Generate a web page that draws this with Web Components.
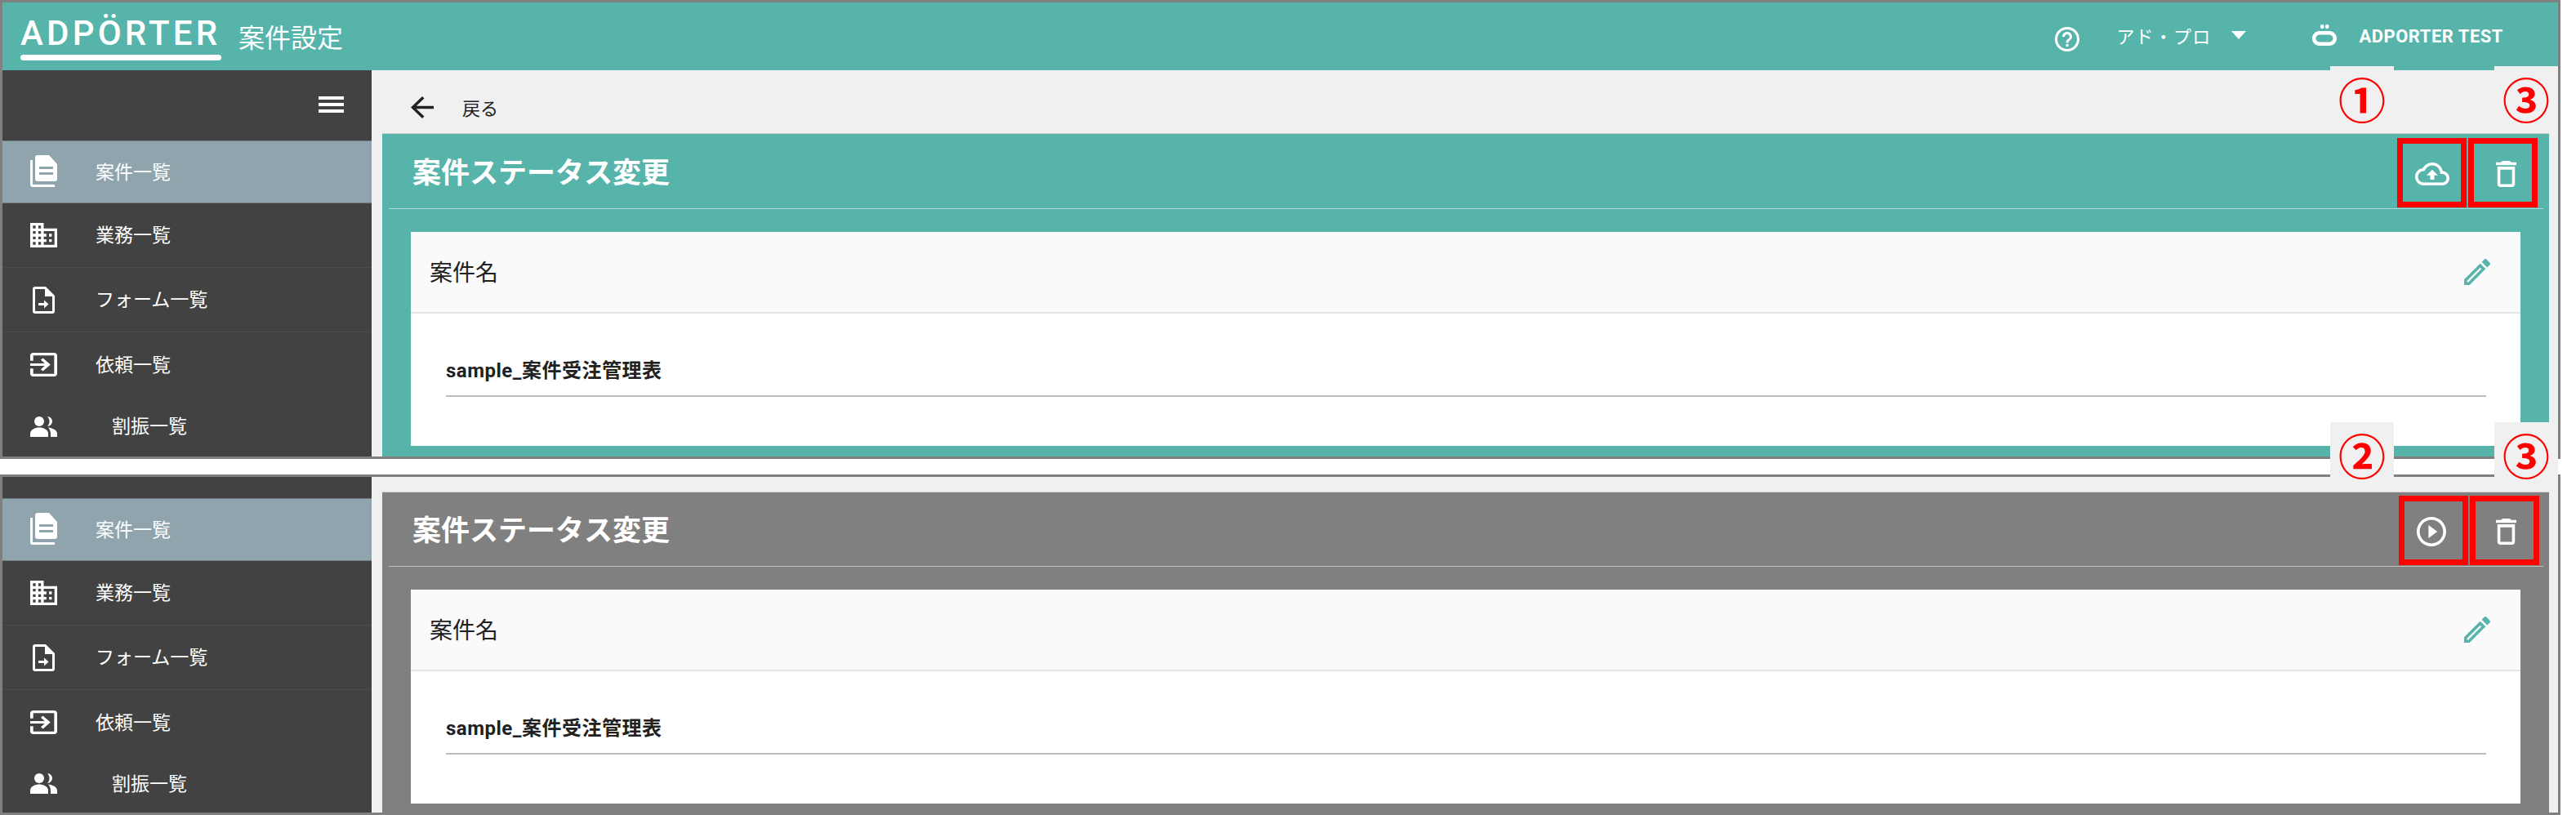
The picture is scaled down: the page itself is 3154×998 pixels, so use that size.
<!DOCTYPE html>
<html lang="ja">
<head>
<meta charset="utf-8">
<title>案件設定</title>
<style>
    html, body { margin: 0; background: #fff; overflow: hidden; }
    body { font-family: Roboto, "Noto Sans CJK JP", sans-serif; }
    #sheet { position: relative; width: 3154px; height: 998px; }
    #second { margin-top: 19px; }
</style>
</head>
<body>
<div id="sheet">
    <app-frame id="first" style="--h:562px">
        <top-bar slot="top"></top-bar>
        <side-nav slot="side" style="--lead:86px" burger>
            <side-item icon="doc" selected style="--row:77px">案件一覧</side-item>
            <side-item icon="business" line>業務一覧</side-item>
            <side-item icon="form" line>フォーム一覧</side-item>
            <side-item icon="input">依頼一覧</side-item>
            <side-item icon="people" wide style="--row:72px">割振一覧</side-item>
        </side-nav>
        <back-link slot="main">戻る</back-link>
        <status-panel slot="main" style="--head:92px;--drop:6px;--end:7px">
            <action-button slot="actions" icon="cloud"></action-button>
            <action-button slot="actions" icon="trash" style="--nudge:7px"></action-button>
            <name-card></name-card>
        </status-panel>
    </app-frame>

    <app-frame id="second" style="--h:417px">
        <side-nav slot="side" style="--lead:26px">
            <side-item icon="doc" selected style="--row:77px">案件一覧</side-item>
            <side-item icon="business" line>業務一覧</side-item>
            <side-item icon="form" line>フォーム一覧</side-item>
            <side-item icon="input">依頼一覧</side-item>
            <side-item icon="people" wide style="--row:71px">割振一覧</side-item>
        </side-nav>
        <div slot="main" style="height:18px"></div>
        <status-panel slot="main" tone="grey" style="--head:91px;--drop:5px;--end:5px">
            <action-button slot="actions" icon="play" style="--nudge:0px;--pull:5px"></action-button>
            <action-button slot="actions" icon="trash" style="--nudge:3px"></action-button>
            <name-card></name-card>
        </status-panel>
    </app-frame>

    <note-badge style="left:2853px;top:81px">①</note-badge>
    <note-badge style="left:3054px;top:81px">③</note-badge>
    <note-badge style="left:2853px;top:517px">②</note-badge>
    <note-badge style="left:3054px;top:517px">③</note-badge>
</div>

<script>
// --- Icon shapes (w, h, viewBox, markup) ---
const ICONS = {
    menu: [31, 20, '0 0 31 20', '<path d="M0 0h31v4H0zM0 8h31v4H0zM0 16h31v4H0z"/>'],
    back: [28, 27, '4 4 16 16', '<path d="M20 11H7.83l5.59-5.59L12 4l-8 8 8 8 1.41-1.41L7.83 13H20v-2z"/>'],
    help: [30, 30, '2 2 20 20', '<path d="M11 18h2v-2h-2v2zm1-16C6.48 2 2 6.48 2 12s4.48 10 10 10 10-4.48 10-10S17.52 2 12 2zm0 18c-4.41 0-8-3.59-8-8s3.59-8 8-8 8 3.59 8 8-3.59 8-8 8zm0-14c-2.21 0-4 1.79-4 4h2c0-1.1.9-2 2-2s2 .9 2 2c0 2-3 1.75-3 5h2c0-2.25 3-2.5 3-5 0-2.21-1.79-4-4-4z"/>'],
    mark: [30, 26, '0 0 30 26', '<rect x="10" y="0" width="4.500" height="5" rx="2"/><rect x="16" y="0" width="4.500" height="5" rx="2"/><path fill-rule="evenodd" d="M9 8h12c5 0 9 4 9 9s-4 9-9 9H9c-5 0-9-4-9-9s4-9 9-9zm1 4.500c-3.500 0-5.500 2-5.500 4.500s2 4.500 5.500 4.500h10c3.500 0 5.500-2 5.500-4.500s-2-4.500-5.500-4.500z"/>'],
    doc: [33, 39, '0 0 33 39', '<path fill-rule="evenodd" d="M9 0h14l10 11v18a3 3 0 0 1-3 3H9a3 3 0 0 1-3-3V3a3 3 0 0 1 3-3zm2 14v3h17v-3zm0 7v3h17v-3z"/><path d="M0 6h3v30h27v3H3a3 3 0 0 1-3-3z"/>'],
    business: [33, 30, '2 3 20 18', '<path d="M12 7V3H2v18h20V7H12zM6 19H4v-2h2v2zm0-4H4v-2h2v2zm0-4H4V9h2v2zm0-4H4V5h2v2zm4 12H8v-2h2v2zm0-4H8v-2h2v2zm0-4H8V9h2v2zm0-4H8V5h2v2zm10 12h-8v-2h2v-2h-2v-2h2v-2h-2V9h8v10zm-2-8h-2v2h2v-2zm0 4h-2v2h2v-2z"/>'],
    form: [27, 33, '0 0 27 33', '<path fill-rule="evenodd" d="M3 0h13l11 11v19a3 3 0 0 1-3 3H3a3 3 0 0 1-3-3V3a3 3 0 0 1 3-3zm0 3v27h21V12H15V3z"/><path d="M7 20h7v-3.500l5.500 5-5.500 5V23H7z"/>'],
    input: [33, 29, '3 3 18 18', '<path d="M10.09 15.59L11.5 17l5-5-5-5-1.41 1.41L12.67 11H3v2h9.67l-2.58 2.59zM19 3H5c-1.11 0-2 .9-2 2v4h2V5h14v14H5v-4H3v4c0 1.1.89 2 2 2h14c1.1 0 2-.9 2-2V5c0-1.1-.9-2-2-2z"/>'],
    people: [33, 25, '0 0 33 25', '<circle cx="11" cy="6" r="6"/><path d="M21 0a6 6 0 0 1 0 12c1.500-1.500 2.500-3.500 2.500-6S22.500 1.500 21 0z"/><path d="M0 25v-4c0-5 6-7.500 11-7.500S22 16 22 21v4z"/><path d="M22 13.500c5 .5 11 3 11 7.500v4h-8v-4c0-3-1.200-5.500-3-7.500z"/>'],
    cloud: [42, 28, '0 4 24 16', '<path d="M19.35 10.04C18.67 6.59 15.64 4 12 4 9.11 4 6.6 5.64 5.35 8.04 2.34 8.36 0 10.91 0 14c0 3.31 2.69 6 6 6h13c2.76 0 5-2.24 5-5 0-2.64-2.05-4.78-4.65-4.96zM19 18H6c-2.21 0-4-1.79-4-4 0-2.05 1.53-3.76 3.56-3.97l1.07-.11.5-.95C8.08 7.14 9.94 6 12 6c2.62 0 4.88 1.86 5.39 4.43l.3 1.5 1.53.11c1.56.1 2.78 1.41 2.78 2.96 0 1.65-1.35 3-3 3zM8 13h2.55v3h2.9v-3H16l-4-4z"/>'],
    trash: [25, 32, '5 3 14 18', '<path d="M16 9v10H8V9h8m-1.5-6h-5l-1 1H5v2h14V4h-3.5l-1-1zM18 7H6v12c0 1.1.9 2 2 2h8c1.1 0 2-.9 2-2V7z"/>'],
    play: [36, 36, '2 2 20 20', '<path d="M10 16.5l6-4.500-6-4.500v9zM12 2C6.48 2 2 6.480 2 12s4.480 10 10 10 10-4.480 10-10S17.520 2 12 2zm0 18c-4.410 0-8-3.590-8-8s3.590-8 8-8 8 3.590 8 8-3.590 8-8 8z"/>'],
    edit: [32, 32, '3 3 18 18', '<path d="M3 17.25V21h3.750L17.810 9.940l-3.750-3.750L3 17.250zM5.920 19H5v-.92l9.060-9.060.92.920L5.920 19zM20.710 5.630l-2.340-2.340c-.39-.39-1.020-.39-1.410 0l-1.830 1.830 3.750 3.750 1.830-1.830c.39-.39.39-1.020 0-1.410z"/>']
};

function iconSvg(name) {
    const [w, h, box, body] = ICONS[name];
    return `<svg width="${w}" height="${h}" viewBox="${box}" preserveAspectRatio="none" fill="currentColor" style="display:block;flex:none">${body}</svg>`;
}

// Small helper so every element below only has to give its template
class ShadowPart extends HTMLElement {
    constructor() {
        super();
        this.attachShadow({ mode: 'open' });
    }
    connectedCallback() {
        this.shadowRoot.innerHTML = this.render();
    }
}

// --- Window frame: optional top bar, then sidebar and main column ---
class AppFrame extends ShadowPart {
    render() {
        return `
            <style>
                :host { display: block; box-sizing: border-box; width: 3135px; height: var(--h); border: 3px solid #808080; overflow: hidden; background: #f0f0f0; }
                .wrap { display: flex; flex-direction: column; height: 100%; }
                .row { display: flex; flex: 1; min-height: 0; }
                .main { display: flex; flex-direction: column; flex: 1; min-width: 0; padding: 0 11px 0 13px; }
            </style>
            <div class="wrap">
                <slot name="top"></slot>
                <div class="row">
                    <slot name="side"></slot>
                    <div class="main"><slot name="main"></slot></div>
                </div>
            </div>
        `;
    }
}
customElements.define('app-frame', AppFrame);

class TopBar extends ShadowPart {
    render() {
        return `
            <style>
                :host { display: flex; align-items: center; flex: none; height: 83px; background: #56b4ab; color: #fff; }
                .logo { display: flex; flex-direction: column; margin-left: 22px; width: 246px; margin-top: -2px; }
                .word { font: 500 42px/42px Roboto, sans-serif; letter-spacing: 4.2px; white-space: nowrap; height: 42px; margin-top: 6px; }
                .bar { height: 7px; border-radius: 4px; background: #fff; margin-top: 5px; }
                .page { font: 400 32px "Noto Sans CJK JP", sans-serif; margin-left: 21px; margin-top: -2px; }
                .help { margin-left: auto; margin-top: 7px; }
                .plan { font: 400 22px "Noto Sans CJK JP", sans-serif; margin-left: 45px; margin-top: -4px; letter-spacing: 1.2px; }
                .caret { width: 0; height: 0; border: 9px solid transparent; border-top: 10px solid #fff; border-bottom: 0; margin-left: 25px; margin-top: -4px; }
                .mark { margin-left: 81px; margin-top: -4px; }
                .user { font: 700 22px Roboto, sans-serif; margin-left: 27px; margin-right: 67px; white-space: nowrap; letter-spacing: 0.5px; }
            </style>
            <div class="logo"><div class="word">ADPÖRTER</div><div class="bar"></div></div>
            <div class="page">案件設定</div>
            <div class="help">${iconSvg('help')}</div>
            <div class="plan">アド・プロ</div>
            <div class="caret"></div>
            <div class="mark">${iconSvg('mark')}</div>
            <div class="user">ADPORTER TEST</div>
        `;
    }
}
customElements.define('top-bar', TopBar);

// --- Sidebar ---
class SideNav extends ShadowPart {
    render() {
        const burger = this.hasAttribute('burger') ? iconSvg('menu') : '';
        return `
            <style>
                :host { display: flex; flex-direction: column; flex: none; width: 452px; background: #424242; color: #fff; }
                .lead { display: flex; align-items: center; justify-content: flex-end; flex: none; box-sizing: border-box; height: var(--lead); padding: 0 34px 2px 0; }
            </style>
            <div class="lead">${burger}</div>
            <slot></slot>
        `;
    }
}
customElements.define('side-nav', SideNav);

class SideItem extends ShadowPart {
    render() {
        return `
            <style>
                :host { display: flex; align-items: center; flex: none; box-sizing: border-box; height: var(--row, 79px); color: #fff; font: 400 23px "Noto Sans CJK JP", sans-serif; }
                :host([selected]) { background: #90a4ae; box-shadow: inset 0 1px 0 #6f7b81, inset 0 -1px 0 #6f7b81; }
                :host([line]) { border-bottom: 1px solid #4c4c4c; }
                .ico { display: flex; justify-content: center; flex: none; width: 33px; margin-left: 34px; }
                :host([selected]) .ico { margin-top: -3px; }
                .txt { margin-left: 47px; margin-top: -4px; }
                :host([wide]) .txt { margin-left: 67px; }
            </style>
            <div class="ico">${iconSvg(this.getAttribute('icon'))}</div>
            <div class="txt"><slot></slot></div>
        `;
    }
}
customElements.define('side-item', SideItem);

// --- Main column ---
class BackLink extends ShadowPart {
    render() {
        return `
            <style>
                :host { display: flex; align-items: center; flex: none; height: 77px; color: #212121; font: 400 22px "Noto Sans CJK JP", sans-serif; }
                .ico { margin-left: 35px; margin-top: 14px; }
                .txt { margin-left: 35px; margin-top: 12px; }
            </style>
            <div class="ico">${iconSvg('back')}</div>
            <div class="txt"><slot></slot></div>
        `;
    }
}
customElements.define('back-link', BackLink);

class StatusPanel extends ShadowPart {
    render() {
        return `
            <style>
                :host { display: flex; flex-direction: column; flex: 1; min-height: 0; background: #56b4ab; box-shadow: inset 0 1px 0 #cfcfcf; }
                :host([tone="grey"]) { background: #808080; }
                .head { display: flex; align-items: flex-start; box-sizing: content-box; height: var(--head); margin: 0 7px 0 8px; border-bottom: 1px solid rgba(255,255,255,.5); }
                h2 { margin: var(--drop) 0 0 29px; height: calc(var(--head) - var(--drop)); flex: 1; font: 700 35px/80px "Noto Sans CJK JP", sans-serif; color: #fff; }
                .tools { display: flex; gap: 2px; margin: var(--drop) var(--end) 0 0; }
                .body { flex: 1; padding: 28px 35px 0; }
            </style>
            <div class="head">
                <h2>案件ステータス変更</h2>
                <div class="tools"><slot name="actions"></slot></div>
            </div>
            <div class="body"><slot></slot></div>
        `;
    }
}
customElements.define('status-panel', StatusPanel);

class ActionButton extends ShadowPart {
    render() {
        return `
            <style>
                :host { display: flex; align-items: center; justify-content: center; box-sizing: border-box; width: 85px; height: 85px; padding: 3px var(--pull, 0) 0 var(--nudge, 0); border: 7px solid #f00; color: #fff; }
            </style>
            ${iconSvg(this.getAttribute('icon'))}
        `;
    }
}
customElements.define('action-button', ActionButton);

class NameCard extends ShadowPart {
    render() {
        return `
            <style>
                :host { display: block; height: 262px; background: #fff; }
                .head { display: flex; align-items: center; justify-content: space-between; box-sizing: border-box; height: 100px; padding: 0 37px 0 23px; background: #fafafa; border-bottom: 2px solid #e4e4e4; font: 400 28px "Noto Sans CJK JP", sans-serif; color: #212121; }
                .head span:first-child { margin-top: -3px; }
                .edit { color: #56b4ab; }
                .field { margin: 52px 42px 0 43px; padding-bottom: 12px; border-bottom: 2px solid #bdbdbd; font: 700 24px/36px Roboto, "Noto Sans CJK JP", sans-serif; color: #212121; letter-spacing: 0.5px; }
            </style>
            <div class="head"><span>案件名</span><span class="edit">${iconSvg('edit')}</span></div>
            <div class="field">sample_案件受注管理表</div>
        `;
    }
}
customElements.define('name-card', NameCard);

// --- Numbered callouts pasted over the screenshot ---
class NoteBadge extends ShadowPart {
    render() {
        return `
            <style>
                :host { position: absolute; display: flex; align-items: center; justify-content: center; width: 78px; height: 77px; background: #f0f0f0; color: #f00; font: 700 58px/1 "Noto Sans CJK JP", sans-serif; }
            </style>
            <slot></slot>
        `;
    }
}
customElements.define('note-badge', NoteBadge);
</script>
</body>
</html>
